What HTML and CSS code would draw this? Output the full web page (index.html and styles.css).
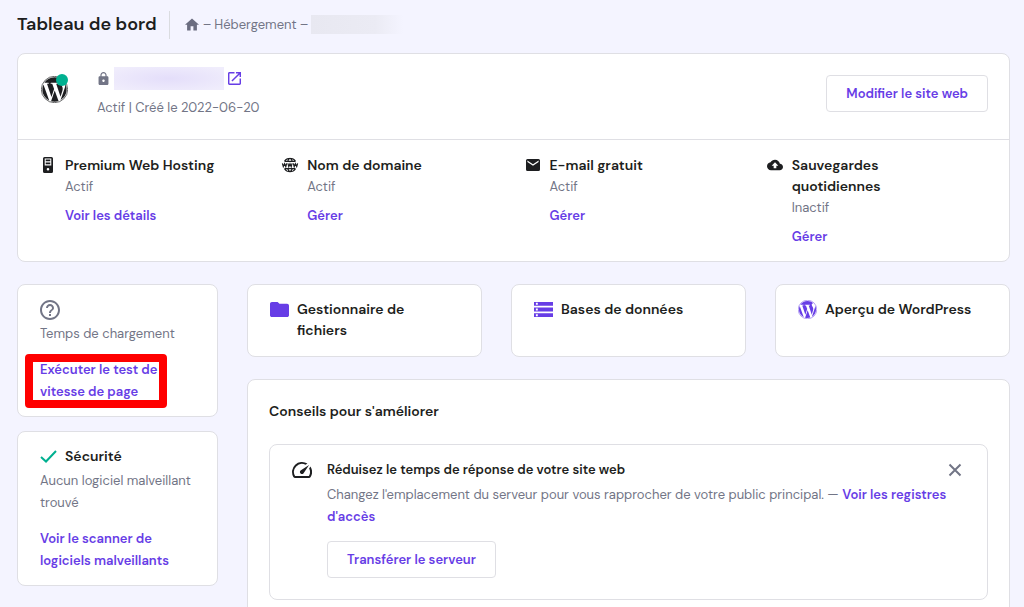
FILE: index.html
```html
<!DOCTYPE html>
<html lang="fr">
<head>
<meta charset="utf-8">
<title>Tableau de bord</title>
<link rel="stylesheet" href="styles.css">
</head>
<body>
<svg class="sprite" aria-hidden="true">
  <symbol id="wordpress" viewBox="0 0 24 24"><path d="M21.469 6.825c.84 1.537 1.318 3.3 1.318 5.175 0 3.979-2.156 7.456-5.363 9.325l3.295-9.527c.615-1.54.82-2.771.82-3.864 0-.405-.026-.78-.07-1.11m-7.981.105c.647-.03 1.232-.105 1.232-.105.582-.075.514-.93-.067-.899 0 0-1.755.135-2.88.135-1.064 0-2.85-.15-2.85-.15-.585-.03-.661.855-.075.885 0 0 .54.061 1.125.09l1.68 4.605-2.37 7.08L5.354 6.9c.649-.03 1.234-.1 1.234-.1.585-.075.516-.93-.065-.896 0 0-1.746.138-2.874.138-.2 0-.438-.008-.69-.015C4.911 3.15 8.235 1.215 12 1.215c2.809 0 5.365 1.072 7.286 2.833-.046-.003-.091-.009-.141-.009-1.06 0-1.812.923-1.812 1.914 0 .89.513 1.643 1.06 2.531.411.72.89 1.643.89 2.977 0 .915-.354 1.994-.821 3.479l-1.075 3.585-3.9-11.61.001.014zM12 22.784c-1.059 0-2.081-.153-3.048-.437l3.237-9.406 3.315 9.087c.024.053.05.101.078.149-1.12.393-2.325.609-3.582.609M1.211 12c0-1.564.336-3.05.935-4.39L7.29 21.709C3.694 19.96 1.212 16.271 1.211 12"/><circle class="wordpress-ring" cx="12" cy="12" r="11.7"/></symbol>
</svg>

<header class="header">
  <h1 class="header-title">Tableau de bord</h1>
  <nav class="crumbs" aria-label="Fil d'Ariane">
    <a href="#" class="crumb-home" aria-label="Accueil"><svg class="icon-home" viewBox="2 3 20 17"><path d="M10 20v-6h4v6h5v-8h3L12 3 2 12h3v8z"/></svg></a>
    <span>–</span>
    <a href="#" class="crumb">Hébergement</a>
    <span>–</span>
    <span class="crumb-mask"></span>
  </nav>
</header>

<main class="page">
  <section class="card site">
    <div class="site-top">
      <div class="site-logo">
        <svg class="icon-site" viewBox="0 0 24 24"><use href="#wordpress"/></svg>
        <span class="site-status"></span>
      </div>
      <div class="site-info">
        <div class="site-domain">
          <svg class="icon-lock" viewBox="4 1 16 21"><path d="M18 8h-1V6c0-2.760-2.240-5-5-5S7 3.240 7 6v2H6c-1.100 0-2 .9-2 2v10c0 1.100.9 2 2 2h12c1.100 0 2-.9 2-2V10c0-1.100-.9-2-2-2zm-6 9c-1.100 0-2-.9-2-2s.9-2 2-2 2 .9 2 2-.9 2-2 2zM8.900 8V6a3.100 3.100 0 0 1 6.200 0v2z"/></svg>
          <span class="domain-mask"></span>
          <a href="#" class="site-open" aria-label="Ouvrir le site"><svg class="icon-open" viewBox="3 3 18 18"><path d="M19 19H5V5h7V3H5c-1.110 0-2 .9-2 2v14c0 1.100.89 2 2 2h14c1.100 0 2-.9 2-2v-7h-2v7zM14 3v2h3.590l-9.830 9.830 1.410 1.410L19 6.410V10h2V3h-7z"/></svg></a>
        </div>
        <p class="muted">Actif | Créé le 2022-06-20</p>
      </div>
      <button class="btn" type="button">Modifier le site web</button>
    </div>
    <div class="services">
      <article class="service">
        <svg class="icon-service" viewBox="0 0 16 16"><path fill-rule="evenodd" d="M4.500 0h7a1.500 1.500 0 0 1 1.500 1.500v13a1.500 1.500 0 0 1-1.500 1.500h-7A1.500 1.500 0 0 1 3 14.500v-13A1.500 1.500 0 0 1 4.500 0zM4.700 1.500v7h6.600v-7zM8 11a1.300 1.300 0 1 0 0 2.600A1.300 1.300 0 0 0 8 11z"/><path d="M5.700 2.600h4.600v1.700H5.700zM5.700 5.500h4.600v1.700H5.700z"/></svg>
        <div>
          <h2 class="title">Premium Web Hosting</h2>
          <p class="muted">Actif</p>
          <a href="#" class="link spaced">Voir les détails</a>
        </div>
      </article>
      <article class="service">
        <svg class="icon-service" viewBox="0 0 16 16"><path class="globe" d="M2.500 4.300A6.500 6.500 0 0 1 13.500 4.300M2.500 11.700a6.500 6.500 0 0 0 11 0M5.600 4.500Q6.400 2 8 1.300Q9.600 2 10.400 4.500M5.600 11.500Q6.400 14 8 14.700Q9.600 14 10.400 11.500M2.500 4.300H13.500M2.500 11.700H13.500"/><path class="globe" d="M.4 6.300l.9 3.300L2.600 6.700l1.200 2.900.9-3.300M5.900 6.300l.9 3.300L8 6.700l1.200 2.900.9-3.300M11.300 6.300l.9 3.300 1.200-2.900 1.300 2.900.9-3.300"/></svg>
        <div>
          <h2 class="title">Nom de domaine</h2>
          <p class="muted">Actif</p>
          <a href="#" class="link spaced">Gérer</a>
        </div>
      </article>
      <article class="service">
        <svg class="icon-service" viewBox="0 0 16 16"><path fill-rule="evenodd" d="M2.500 2h11A1.500 1.500 0 0 1 15 3.500v9a1.500 1.500 0 0 1-1.500 1.500h-11A1.500 1.500 0 0 1 1 12.500v-9A1.500 1.500 0 0 1 2.500 2zM2.400 3.600v1.500L8 8.700l5.600-3.600V3.600L8 7.200z"/></svg>
        <div>
          <h2 class="title">E-mail gratuit</h2>
          <p class="muted">Actif</p>
          <a href="#" class="link spaced">Gérer</a>
        </div>
      </article>
      <article class="service">
        <svg class="icon-service" viewBox="0 0 24 24"><path d="M19.350 10.040C18.670 6.590 15.640 4 12 4 9.110 4 6.600 5.640 5.350 8.040 2.340 8.360 0 10.910 0 14c0 3.310 2.690 6 6 6h13c2.760 0 5-2.240 5-5 0-2.640-2.050-4.780-4.650-4.960zM14 13v4h-4v-4H7l5-5 5 5h-3z"/></svg>
        <div>
          <h2 class="title">Sauvegardes quotidiennes</h2>
          <p class="muted">Inactif</p>
          <a href="#" class="link spaced">Gérer</a>
        </div>
      </article>
    </div>
  </section>

  <div class="columns">
    <aside class="side">
      <section class="card side-card">
        <svg class="icon-help" viewBox="2 2 20 20"><path d="M11 18h2v-2h-2v2zm1-16C6.480 2 2 6.480 2 12s4.480 10 10 10 10-4.480 10-10S17.520 2 12 2zm0 18c-4.410 0-8-3.590-8-8s3.590-8 8-8 8 3.590 8 8-3.590 8-8 8zm0-14c-2.210 0-4 1.790-4 4h2c0-1.100.9-2 2-2s2 .9 2 2c0 2-3 1.750-3 5h2c0-2.250 3-2.500 3-5 0-2.210-1.790-4-4-4z"/></svg>
        <p class="muted">Temps de chargement</p>
        <a href="#" class="link block highlight">Exécuter le test de vitesse de page</a>
      </section>
      <section class="card side-card">
        <h2 class="title side-title"><svg class="icon-check" viewBox="0 0 17 13"><path d="M1 7l5 4.500L16 1"/></svg>Sécurité</h2>
        <p class="muted">Aucun logiciel malveillant trouvé</p>
        <a href="#" class="link block">Voir le scanner de logiciels malveillants</a>
      </section>
    </aside>

    <div class="content">
      <div class="tiles">
        <a href="#" class="card tile">
          <svg class="icon-tile" viewBox="2 2 20 20"><path d="M10 4H4c-1.100 0-2 .9-2 2v12c0 1.100.9 2 2 2h16c1.100 0 2-.9 2-2V8c0-1.100-.9-2-2-2h-8l-2-2z"/></svg>
          <span class="title">Gestionnaire de fichiers</span>
        </a>
        <a href="#" class="card tile">
          <svg class="icon-tile" viewBox="2 2 20 20"><path d="M2 20h20v-4H2v4zm2-3h2v2H4v-2zM2 4v4h20V4H2zm4 3H4V5h2v2zm-4 7h20v-4H2v4zm2-3h2v2H4v-2z"/></svg>
          <span class="title">Bases de données</span>
        </a>
        <a href="#" class="card tile">
          <svg class="icon-tile" viewBox="0 0 24 24"><use href="#wordpress"/></svg>
          <span class="title">Aperçu de WordPress</span>
        </a>
      </div>

      <section class="card tips">
        <h2 class="title">Conseils pour s'améliorer</h2>
        <article class="card tip">
          <svg class="icon-speed" viewBox="2 4 20 16"><path d="M20.380 8.570l-1.230 1.850a8 8 0 0 1-.22 7.580H5.070A8 8 0 0 1 15.580 6.850l1.850-1.230A10 10 0 0 0 3.350 19a2 2 0 0 0 1.720 1h13.850a2 2 0 0 0 1.740-1 10 10 0 0 0-.27-10.440zm-9.790 6.840a2 2 0 0 0 2.830 0l5.660-8.490-8.490 5.660a2 2 0 0 0 0 2.830z"/></svg>
          <div class="tip-body">
            <h3 class="tip-title">Réduisez le temps de réponse de votre site web</h3>
            <p class="muted tip-text">Changez l'emplacement du serveur pour vous rapprocher de votre public principal. — <a href="#" class="link">Voir les registres d'accès</a></p>
            <button class="btn" type="button">Transférer le serveur</button>
          </div>
          <button class="close" type="button" aria-label="Fermer"><svg class="icon-close" viewBox="0 0 12 12"><path d="M0.500 0.500l11 11M11.500 0.500l-11 11"/></svg></button>
        </article>
      </section>
    </div>
  </div>
</main>
</body>
</html>
```
FILE: styles.css
```css
* { box-sizing: border-box; }

body {
  margin: 0;
  padding: 0 14px 22px 17px;
  background: #f4f4ff;
  color: #1d1e20;
  font: 13px/22px "DM Sans", Inter, "Liberation Sans", sans-serif;
}

h1, h2, h3, p { margin: 0; }
a { color: inherit; text-decoration: none; }
svg { display: block; flex: none; fill: currentColor; }
button { font: inherit; cursor: pointer; }

.sprite { position: absolute; width: 0; height: 0; }
.wordpress-ring { fill: none; stroke: currentColor; stroke-width: 0.6; }

.header {
  display: flex;
  align-items: center;
  height: 53px;
  padding-bottom: 4px;
}
.header-title {
  padding: 0 12px 2px 0;
  font-size: 18px;
  line-height: 28px;
  font-weight: 600;
}
.crumbs {
  display: flex;
  align-items: center;
  gap: 3px;
  height: 28px;
  padding-left: 15px;
  border-left: 1px solid #dadce0;
  color: #727586;
}
.icon-home { width: 14px; height: 13px; }
.crumb-home { margin-right: 1px; color: #6b6d80; }
.crumb-mask {
  width: 92px;
  height: 19px;
  background: linear-gradient(90deg, #e8e8f1, #ebebf4 70%, #f4f4ff);
}

.card {
  background: #fff;
  border: 1px solid #dfdfe4;
  border-radius: 8px;
}
.title { font-size: 14px; line-height: 21px; font-weight: 600; }
.muted { color: #727586; font-size: 13px; }
.link { color: #673de6; font-size: 13px; font-weight: 600; }
.spaced { display: inline-block; margin-top: 7px; }
.block { display: block; }

.btn {
  height: 37px;
  padding: 0 19px;
  background: #fff;
  border: 1px solid #dfdfe4;
  border-radius: 4px;
  color: #673de6;
  font-size: 13px;
  font-weight: 600;
}

.site-top {
  display: flex;
  align-items: flex-start;
  padding: 12px 21px 20px 23px;
  border-bottom: 1px solid #dfdfe4;
}
.site-logo { position: relative; margin: 10px 29px 0 0; color: #1d1e20; }
.icon-site { width: 27px; height: 27px; }
.site-status {
  position: absolute;
  top: -2px;
  right: 0;
  width: 12px;
  height: 12px;
  border-radius: 50%;
  background: #00b090;
}
.site-info { flex: 1; }
.site-top .btn { margin-top: 9px; }
.site-domain { display: flex; align-items: center; gap: 4px; height: 25px; margin-bottom: 6px; }
.icon-lock { width: 13px; height: 13px; color: #727586; }
.domain-mask {
  width: 110px;
  height: 23px;
  background: radial-gradient(ellipse at center, #e4defa, #f0edfc 90%);
}
.site-open { color: #673de6; }
.icon-open { width: 13px; height: 13px; }

.services {
  display: grid;
  grid-template-columns: repeat(4, 1fr);
  padding: 15px 0 13px 22px;
}
.service { display: flex; gap: 9px; padding-right: 40px; }
.icon-service { width: 16px; height: 16px; margin-top: 2px; overflow: visible; }
.globe { fill: none; stroke: currentColor; stroke-width: 1.2; }

.columns {
  display: grid;
  grid-template-columns: 201px 1fr;
  gap: 29px;
  margin-top: 22px;
}
.side { display: flex; flex-direction: column; gap: 14px; }
.side-card { padding: 14px 20px 13px 22px; }
.icon-help { width: 20px; height: 20px; margin: 1px 0 3px; color: #727586; }
.side-card .block { margin-top: 14px; }
.side-title { display: flex; align-items: center; gap: 8px; margin-bottom: 3px; }
.icon-check {
  width: 17px;
  height: 13px;
  fill: none;
  stroke: #00b090;
  stroke-width: 2;
}
.highlight { position: relative; max-width: 120px; }
.highlight::after {
  content: "";
  position: absolute;
  inset: -5px -7px -5px -15px;
  border: 8px solid #f00;
  border-radius: 4px;
}

.tiles {
  display: grid;
  grid-template-columns: repeat(3, 1fr);
  gap: 29px;
}
.tile { display: flex; gap: 8px; padding: 14px 22px 15px; }
.tile:first-child { padding-right: 40px; }
.icon-tile { width: 19px; height: 19px; margin-top: 1px; color: #673de6; }

.tips { margin-top: 22px; padding: 21px; }
.tip { display: flex; gap: 15px; margin-top: 22px; padding: 14px 26px 21px 22px; }
.icon-speed { width: 20px; height: 16px; margin-top: 3px; }
.tip-body { flex: 1; }
.tip-title { font-size: 13px; line-height: 22px; font-weight: 600; }
.tip-text { margin: 3px 0 13px; }
.close {
  align-self: flex-start;
  margin-left: -15px;
  padding: 5px 0;
  border: 0;
  background: none;
  color: #727586;
}
.icon-close { width: 12px; height: 12px; stroke: currentColor; stroke-width: 2; overflow: visible; }
```
